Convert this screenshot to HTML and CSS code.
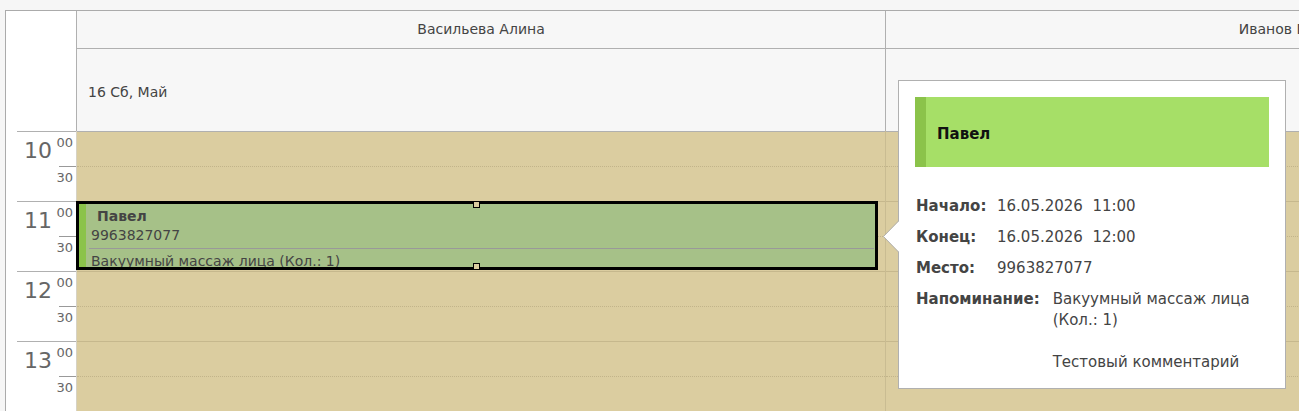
FILE: index.html
```html
<!DOCTYPE html>
<html lang="ru">
<head>
<meta charset="utf-8">
<title>Календарь</title>
<link rel="stylesheet" href="styles.css">
</head>
<body>
<div class="cal">
  <div class="tcol">
    <div class="thead"></div>
    <div class="tcell"><span class="hh">10</span><div class="mm"><span class="m0">00</span><span class="dash"></span><span class="m3">30</span></div></div>
    <div class="tcell"><span class="hh">11</span><div class="mm"><span class="m0">00</span><span class="dash"></span><span class="m3">30</span></div></div>
    <div class="tcell"><span class="hh">12</span><div class="mm"><span class="m0">00</span><span class="dash"></span><span class="m3">30</span></div></div>
    <div class="tcell"><span class="hh">13</span><div class="mm"><span class="m0">00</span><span class="dash"></span><span class="m3">30</span></div></div>
  </div>
  <div class="dcol">
    <div class="dname">Васильева Алина</div>
    <div class="ddate">16 Сб, Май</div>
    <div class="dbody">
      <div class="slot"><div class="half"></div><div class="half"></div></div>
      <div class="slot"><div class="half"></div><div class="half"></div></div>
      <div class="slot"><div class="half"></div><div class="half"></div></div>
      <div class="slot"><div class="half"></div><div class="half"></div></div>
      <div class="event">
        <div class="ev-in">
          <div class="ev-name">Павел</div>
          <div class="ev-phone">9963827077</div>
          <div class="ev-sep"></div>
          <div class="ev-svc">Вакуумный массаж лица (Кол.: 1)</div>
        </div>
        <span class="handle handle-top"></span>
        <span class="handle handle-bottom"></span>
      </div>
    </div>
  </div>
  <div class="dcol">
    <div class="dname">Иванов Павел</div>
    <div class="ddate"></div>
    <div class="dbody">
      <div class="slot"><div class="half"></div><div class="half"></div></div>
      <div class="slot"><div class="half"></div><div class="half"></div></div>
      <div class="slot"><div class="half"></div><div class="half"></div></div>
      <div class="slot"><div class="half"></div><div class="half"></div></div>
    </div>
  </div>
</div>

<div class="tip">
  <svg class="tip-arrow" width="17" height="31" viewBox="0 0 17 31">
    <polygon points="17,0 1.5,15.5 17,31" fill="#fff"/>
    <polyline points="16.5,0 1.5,15.5 16.5,31" fill="none" stroke="#b0b0b0" stroke-width="1"/>
  </svg>
  <div class="tip-head">Павел</div>
  <div class="tip-rows">
    <div class="row"><span class="lbl">Начало:</span><span class="val">16.05.2026&nbsp; 11:00</span></div>
    <div class="row"><span class="lbl">Конец:</span><span class="val">16.05.2026&nbsp; 12:00</span></div>
    <div class="row"><span class="lbl">Место:</span><span class="val">9963827077</span></div>
    <div class="row"><span class="lbl lbl-wide">Напоминание:</span><span class="val">Вакуумный массаж лица (Кол.: 1)<br><br>Тестовый комментарий</span></div>
  </div>
</div>
</body>
</html>
```

FILE: styles.css
```css
html, body {
  margin: 0;
  padding: 0;
  overflow: hidden;
}
body {
  background: #f6f6f6;
  font-family: "DejaVu Sans", Verdana, sans-serif;
  height: 411px;
  position: relative;
}
.cal {
  display: flex;
  margin: 10px 0 0 5px;
  border-top: 1px solid #ababab;
  border-left: 1px solid #ababab;
  width: max-content;
}
.tcol {
  width: 70px;
  flex: none;
  background: #fff;
}
.thead {
  height: 120px;
}
.tcell {
  height: 70px;
  margin-left: 11px;
  border-top: 1px solid #b0b0b0;
  box-sizing: border-box;
  display: flex;
  justify-content: flex-end;
  color: #666;
}
.hh {
  font-size: 22px;
  line-height: 26px;
  margin-top: 6px;
}
.mm {
  display: flex;
  flex-direction: column;
  align-items: flex-end;
  width: 22px;
  margin-left: 2px;
}
.m0 {
  font-size: 13px;
  line-height: 15px;
  height: 34px;
  box-sizing: border-box;
  padding: 3px 3px 0 0;
}
.dash {
  width: 17px;
  height: 1px;
  background: #999;
}
.m3 {
  font-size: 13px;
  line-height: 15px;
  padding-right: 3px;
  margin-top: 3px;
}
.dcol {
  width: 809px;
  flex: none;
}
.dname {
  height: 38px;
  box-sizing: border-box;
  border-left: 1px solid #b0b0b0;
  border-bottom: 1px solid #b0b0b0;
  background: #f7f7f7;
  text-align: center;
  font-size: 14px;
  line-height: 37px;
  color: #444;
}
.ddate {
  height: 82px;
  box-sizing: border-box;
  border-left: 1px solid #b0b0b0;
  background: #f7f7f7;
  display: flex;
  align-items: center;
  padding: 3px 0 0 11px;
  font-size: 14px;
  color: #444;
}
.dbody {
  position: relative;
  background: #dbcda0;
  border-left: 1px solid #c9bc92;
}
.dcol:nth-child(2) .dbody {
  border-left-color: #d6d2c4;
}
.slot {
  height: 70px;
  box-sizing: border-box;
  border-top: 1px solid #c6b88d;
}
.slot:first-child {
  border-top-color: #b0b0b0;
}
.half {
  height: 34px;
}
.half:first-child {
  border-bottom: 1px dotted #c2b48a;
}

.event {
  position: absolute;
  left: -1px;
  top: 70px;
  width: 802px;
  height: 69px;
  box-sizing: border-box;
  border: 3px solid #000;
  background: #a6c188;
  color: #444;
  font-size: 14px;
}
.ev-in {
  height: 100%;
  border-left: 7px solid #8bc34a;
  padding-left: 3px;
  overflow: hidden;
}
.ev-name {
  font-weight: bold;
  line-height: 18px;
  padding: 3px 0 0 8px;
}
.ev-phone {
  line-height: 18px;
  padding: 1px 0 0 2px;
}
.ev-sep {
  height: 1px;
  background: #999;
  margin: 4px 1px 0 0;
}
.ev-svc {
  line-height: 18px;
  padding: 3px 0 0 2px;
  white-space: nowrap;
}
.handle {
  position: absolute;
  left: 394px;
  width: 7px;
  height: 7px;
  box-sizing: border-box;
  border: 1px solid #000;
  background: #dbcda0;
}
.handle-top {
  top: -3px;
}
.handle-bottom {
  bottom: -3px;
}

.tip {
  position: absolute;
  left: 898px;
  top: 80px;
  width: 388px;
  height: 309px;
  box-sizing: border-box;
  background: #fff;
  border: 1px solid #b0b0b0;
  padding: 16px;
}
.tip-arrow {
  position: absolute;
  left: -17px;
  top: 140px;
  display: block;
}
.tip-head {
  height: 70px;
  box-sizing: border-box;
  background: #a6df67;
  border-left: 11px solid #8bc34a;
  display: flex;
  align-items: center;
  padding: 3px 0 0 11px;
  font-weight: bold;
  font-size: 15px;
  color: #111;
}
.tip-rows {
  margin-top: 29px;
  font-size: 15px;
  line-height: 21px;
  color: #444;
}
.row {
  display: flex;
  margin-bottom: 10px;
}
.lbl {
  font-weight: bold;
  min-width: 71px;
  margin-right: 10px;
  padding-left: 1px;
  flex: none;
}
.lbl-wide {
  margin-right: 13px;
}
.val {
  flex: 1;
}
```
